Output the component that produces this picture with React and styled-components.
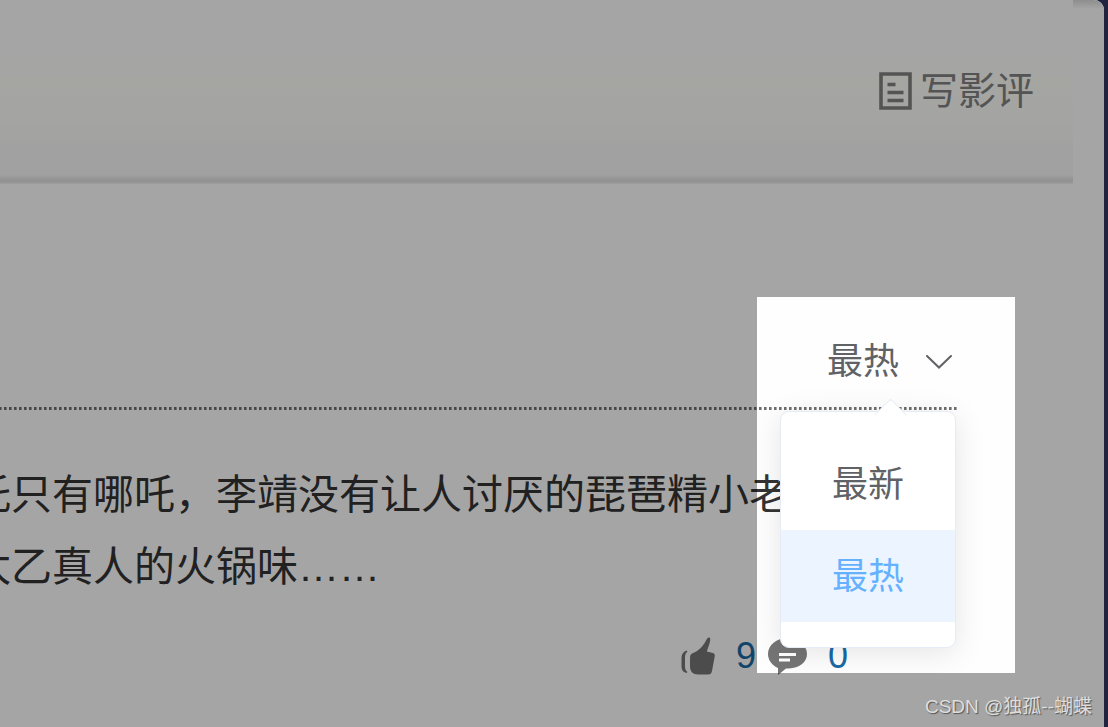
import { useState } from 'react';
import styled, { createGlobalStyle } from 'styled-components';

const colors = {
  text: '#333333',
  secondary: '#606266',
  muted: '#828282',
  link: '#1a69a5',
  active: '#66b1ff',
  activeBg: '#ecf5ff',
  border: '#e6ebf5',
};

const GlobalStyle = createGlobalStyle`
  * {
    box-sizing: border-box;
  }

  body {
    margin: 0;
    background: #22243f;
    font-family: 'Liberation Sans', 'Noto Sans CJK SC', sans-serif;
    color: ${colors.text};
  }

  button {
    border: 0;
    padding: 0;
    background: none;
    font-family: inherit;
    cursor: pointer;
  }
`;

const Page = styled.div`
  position: relative;
  min-height: 100vh;
  margin-right: 4px;
  border-radius: 0 10px 0 0;
  background: #fefefe;
  overflow: hidden;
`;

const Header = styled.header`
  display: flex;
  align-items: flex-start;
`;

const Banner = styled.div`
  flex: 1;
  height: 184px;
  padding: 62px 39px 0 0;
  display: flex;
  justify-content: flex-end;
  align-items: flex-start;
  background: linear-gradient(
    #fefefe 50px,
    #fdfdf9 80px,
    #fcfcf9 120px,
    #f8f8f8 150px,
    #f7f7f7 175px,
    #e0e0e0 180px,
    #e0e0e0 182px,
    #fefefe 185px
  );
`;

const BannerEdge = styled.div`
  width: 31px;
  height: 9px;
  background: linear-gradient(#dadada, #fefefe);
`;

const WriteLink = styled.a`
  display: flex;
  align-items: center;
  gap: 8px;
  height: 58px;
  font-size: 38px;
  line-height: 58px;
  color: ${colors.muted};
  text-decoration: none;
`;

const Main = styled.main`
  padding: 133px 147px 0 0;
`;

const SortBar = styled.div`
  position: relative;
  display: flex;
  justify-content: flex-end;
  align-items: center;
  height: 90px;
  padding-right: 5px;
`;

const SortButton = styled.button`
  display: flex;
  align-items: center;
  gap: 27px;
  font-size: 36px;
  line-height: 52px;
  color: ${colors.secondary};
`;

const Menu = styled.div`
  position: absolute;
  z-index: 1;
  top: 94px;
  right: 1px;
  width: 176px;
  padding: 26px 0 25px;
  border: 1px solid ${colors.border};
  border-radius: 9px;
  background: #ffffff;
  box-shadow: 0 5px 31px rgba(0, 0, 0, 0.1);

  &::before {
    content: '';
    position: absolute;
    top: -9px;
    left: 98px;
    width: 22px;
    height: 22px;
    border: 1px solid ${colors.border};
    border-right: 0;
    border-bottom: 0;
    border-radius: 3px 0 0 0;
    background: #ffffff;
    transform: rotate(45deg);
  }
`;

const MenuItem = styled.button`
  position: relative;
  display: block;
  width: 100%;
  height: 92px;
  padding-top: 2px;
  font-size: 36px;
  line-height: 90px;
  text-align: center;
  color: ${({ $active }) => ($active ? colors.active : colors.secondary)};
  background: ${({ $active }) => ($active ? colors.activeBg : '#ffffff')};
`;

const Divider = styled.div`
  height: 3px;
  background: repeating-linear-gradient(
    to left,
    #aaaaaa 0 1px,
    #6e6e6e 1px 3px,
    transparent 3px 5px
  );
`;

const Comment = styled.p`
  margin: 49px 0 0 -30px;
  font-size: 41px;
  line-height: 72px;
  white-space: nowrap;
`;

const Votes = styled.div`
  display: flex;
  justify-content: flex-end;
  align-items: center;
  gap: 12px;
  height: 48px;
  margin-top: 29px;
  padding-right: 109px;
`;

const Vote = styled.button`
  display: flex;
  align-items: center;
  gap: 21px;
  font-size: 36px;
  line-height: 48px;
  color: ${colors.link};
`;

// everything outside of this box is dimmed
const Spotlight = styled.div`
  position: absolute;
  z-index: 2;
  top: 297px;
  right: 89px;
  width: 258px;
  height: 376px;
  box-shadow: 0 0 0 3000px rgba(0, 0, 0, 0.35);
  pointer-events: none;
`;

const Watermark = styled.span`
  position: absolute;
  z-index: 3;
  right: 12px;
  bottom: 6px;
  font-size: 19px;
  line-height: 28px;
  color: #dedede;
  text-shadow: 1px 1px 1px #555555;
`;

const NoteIcon = () => (
  <svg width="33" height="38" viewBox="0 0 33 38" fill="none" stroke="currentColor">
    <path d="M2 2h29v34H2z" strokeWidth="3.6" />
    <path d="M8.5 12.5h8M8.5 20.5h16M8.5 28.5h16" strokeWidth="3.4" />
  </svg>
);

const ArrowIcon = () => (
  <svg width="26" height="14" viewBox="0 0 26 14" fill="none" stroke="currentColor">
    <path d="M1 1l12 11.5L25 1" strokeWidth="2" strokeLinecap="round" />
  </svg>
);

const ThumbIcon = () => (
  <svg width="34" height="38" viewBox="0 0 34 38" fill="#757575">
    <path d="M5.500 13.500C2 15 .500 17.500 .500 21v8c0 4 1.500 6 5 7l1-1c-1.700-1-2.500-3-2.500-6v-8c0-3 .500-5 2.500-6.500z" />
    <path d="M11 16.500c6-2 11-7 14-13 .800-2 2-3.500 3.300-3 1.500.600 1 3.500.200 6l-2.700 8 6.200 1.500c1.500.500 2 1.500 1.800 3L31 34c-.500 2.500-1.500 3.500-4 3.500H17c-5 0-8-3-8-8v-8c0-2.500.500-4.200 2-5z" />
  </svg>
);

const ReplyIcon = () => (
  <svg width="39" height="38" viewBox="0 0 39 38">
    <path
      d="M19.500 1C8.500 1 0 8 0 17c0 6 4 11.500 10 14v7l8-6.500h3c10-.500 18-6 18-14.500S31 1 19.500 1z"
      fill="#757575"
    />
    <path d="M11 17.500h17M11 23h11" stroke="#ffffff" strokeWidth="3" />
  </svg>
);

const options = ['最新', '最热'];

const App = () => {
  const [sort, setSort] = useState('最热');
  const [open, setOpen] = useState(true);

  const handleSelect = option => {
    setSort(option);
    setOpen(false);
  };

  return (
    <>
      <GlobalStyle />
      <Page>
        <Header>
          <Banner>
            <WriteLink href="#write">
              <NoteIcon />
              写影评
            </WriteLink>
          </Banner>
          <BannerEdge />
        </Header>
        <Main>
          <SortBar>
            <SortButton
              type="button"
              aria-expanded={open}
              onClick={() => setOpen(!open)}
            >
              {sort}
              <ArrowIcon />
            </SortButton>
            {open && (
              <Menu>
                {options.map(option => (
                  <MenuItem
                    key={option}
                    type="button"
                    $active={option === sort}
                    onClick={() => handleSelect(option)}
                  >
                    {option}
                  </MenuItem>
                ))}
              </Menu>
            )}
          </SortBar>
          <Divider />
          <Comment>
            吒只有哪吒，李靖没有让人讨厌的琵琶精小老
            <br />
            太乙真人的火锅味……
          </Comment>
          <Votes>
            <Vote type="button" aria-label="赞 9">
              <ThumbIcon />9
            </Vote>
            <Vote type="button" aria-label="回复 0">
              <ReplyIcon />0
            </Vote>
          </Votes>
        </Main>
        <Spotlight />
        <Watermark>CSDN @独孤--蝴蝶</Watermark>
      </Page>
    </>
  );
};

export default App;
